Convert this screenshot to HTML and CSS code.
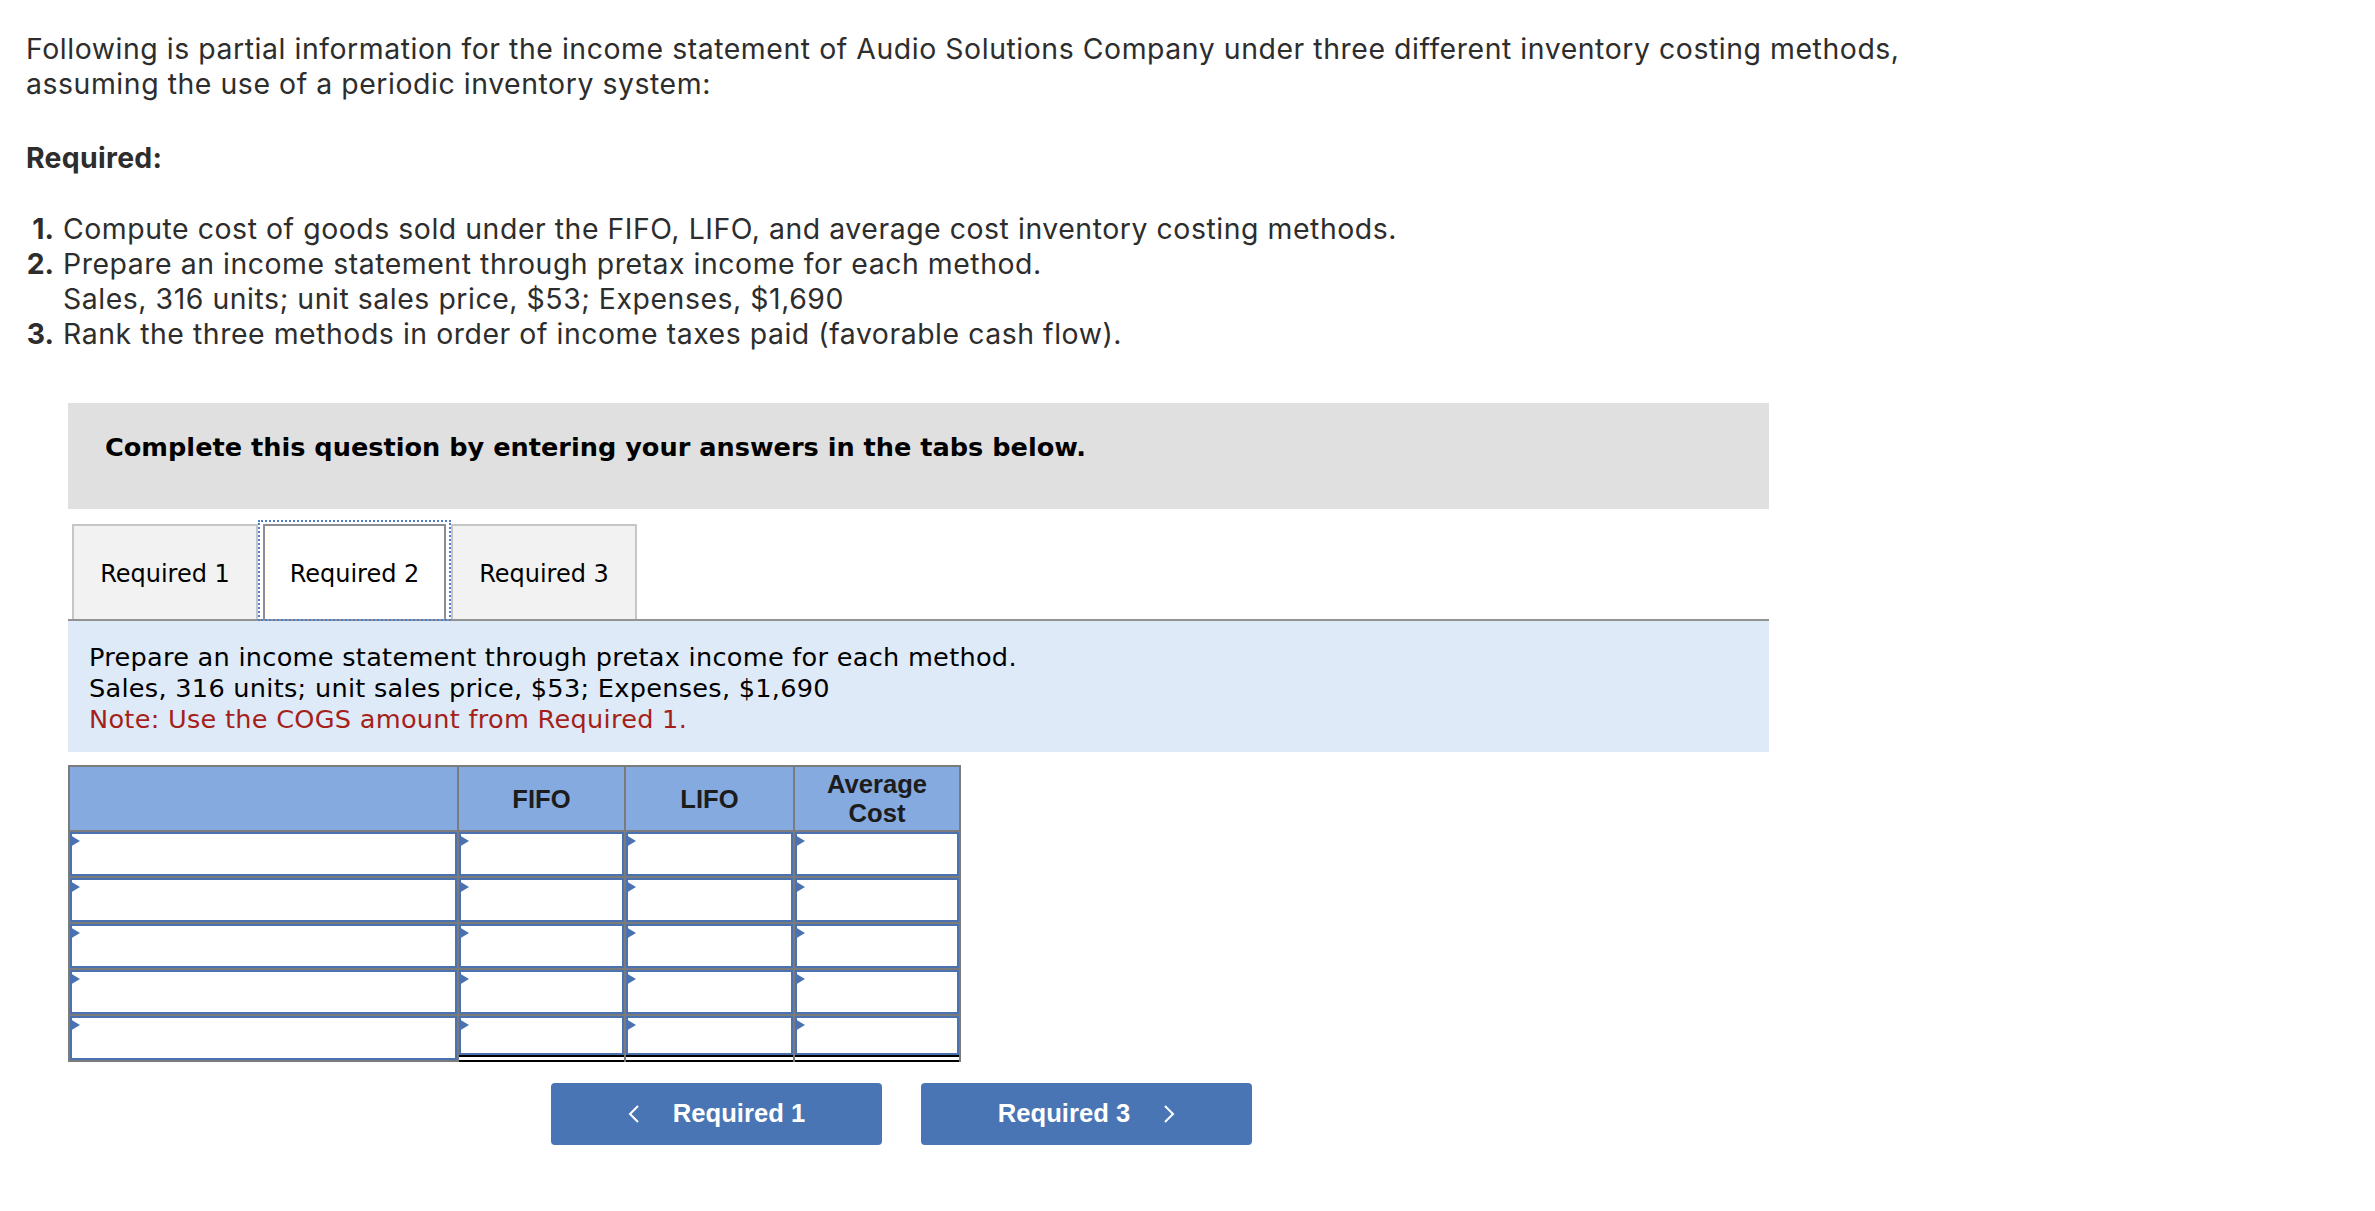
FILE: index.html
```html
<!DOCTYPE html>
<html lang="en">
<head>
<meta charset="utf-8">
<title>Audio Solutions Company</title>
<link rel="stylesheet" href="styles.css">
</head>
<body>
<div class="page">
  <p class="intro">Following is partial information for the income statement of Audio Solutions Company under three different inventory costing methods,<br>assuming the use of a periodic inventory system:</p>
  <p class="req-title">Required:</p>
  <ol class="req-list">
    <li><b>1.</b><span>Compute cost of goods sold under the FIFO, LIFO, and average cost inventory costing methods.</span></li>
    <li><b>2.</b><span>Prepare an income statement through pretax income for each method.<br>Sales, 316 units; unit sales price, $53; Expenses, $1,690</span></li>
    <li><b>3.</b><span>Rank the three methods in order of income taxes paid (favorable cash flow).</span></li>
  </ol>

  <div class="workspace">
    <div class="banner">Complete this question by entering your answers in the tabs below.</div>

    <div class="tabs">
      <div class="tab">Required 1</div>
      <div class="tab active">Required 2</div>
      <div class="tab">Required 3</div>
    </div>

    <div class="info">
      Prepare an income statement through pretax income for each method.<br>
      Sales, 316 units; unit sales price, $53; Expenses, $1,690<br>
      <span class="note">Note: Use the COGS amount from Required 1.</span>
    </div>

    <div class="sheet">
      <div class="hcell"></div>
      <div class="hcell">FIFO</div>
      <div class="hcell">LIFO</div>
      <div class="hcell">Average<br>Cost</div>

      <div class="field"></div><div class="field"></div><div class="field"></div><div class="field"></div>
      <div class="field"></div><div class="field"></div><div class="field"></div><div class="field"></div>
      <div class="field"></div><div class="field"></div><div class="field"></div><div class="field"></div>
      <div class="field"></div><div class="field"></div><div class="field"></div><div class="field"></div>

      <div class="cell"><div class="field"></div></div>
      <div class="cell total"><div class="field short"></div></div>
      <div class="cell total"><div class="field short"></div></div>
      <div class="cell total"><div class="field short"></div></div>
    </div>

    <div class="nav">
      <div class="btn">
        <svg class="chev" width="12" height="18" viewBox="0 0 12 18"><polyline points="10,1 2,9 10,17" fill="none" stroke="#fff" stroke-width="2"/></svg>
        <span>Required 1</span>
      </div>
      <div class="btn">
        <span>Required 3</span>
        <svg class="chev" width="12" height="18" viewBox="0 0 12 18"><polyline points="2,1 10,9 2,17" fill="none" stroke="#fff" stroke-width="2"/></svg>
      </div>
    </div>
  </div>
</div>
</body>
</html>
```
FILE: styles.css
```css
html, body {
  margin: 0;
  padding: 0;
  background: #ffffff;
}

.page {
  padding: 32px 0 40px 26px;
  font-family: Inter, "Open Sans", sans-serif;
  color: #2d2d2d;
}

.intro {
  margin: 0;
  font-size: 28.4px;
  line-height: 34.5px;
  letter-spacing: 0.56px;
  white-space: nowrap;
}

.req-title {
  margin: 40px 0 0;
  font-size: 28.4px;
  line-height: 34.5px;
  font-weight: 700;
  letter-spacing: 0.3px;
}

.req-list {
  list-style: none;
  margin: 35px 0 0;
  padding: 0;
  font-size: 28.4px;
  line-height: 35.3px;
  letter-spacing: 0.55px;
}

.req-list li {
  display: grid;
  grid-template-columns: 28px 1fr;
  column-gap: 9px;
}

.req-list b {
  text-align: right;
  font-weight: 700;
  letter-spacing: 0;
}

.workspace {
  margin: 51px 0 0 42px;
  width: 1701px;
}

.banner {
  box-sizing: border-box;
  height: 106px;
  background: #e0e0e0;
  padding: 29px 37px 0;
  font-family: "DejaVu Sans", Verdana, sans-serif;
  font-weight: 700;
  font-size: 25.6px;
  line-height: 30px;
  color: #000;
}

.tabs {
  margin-top: 15px;
  display: flex;
  align-items: flex-end;
  padding-left: 4px;
  height: 95px;
  border-bottom: 2px solid #939393;
}

.tab {
  box-sizing: border-box;
  height: 95px;
  width: 186px;
  padding-top: 4px;
  border: 2px solid #c6c6c6;
  border-bottom: 0;
  background: #f2f2f2;
  display: flex;
  align-items: center;
  justify-content: center;
  font-family: "DejaVu Sans", Verdana, sans-serif;
  font-size: 24px;
  color: #000;
}

.tab.active {
  position: relative;
  width: 183px;
  margin: 0 5px;
  background: #ffffff;
  border-color: #8e8e8e;
}

.tab.active::after {
  content: "";
  position: absolute;
  left: -7px;
  right: -7px;
  top: -6px;
  bottom: -2px;
  border: 2px dotted #4f7fc6;
}

.info {
  background: #deeaf7;
  padding: 21px 21px 17px;
  font-family: "DejaVu Sans", Verdana, sans-serif;
  font-size: 25.6px;
  line-height: 31px;
  letter-spacing: 0.27px;
  color: #000;
}

.note {
  color: #a51f1b;
}

.sheet {
  margin-top: 13px;
  display: grid;
  grid-template-columns: 387px 165px 167px 164px;
  grid-template-rows: 63px repeat(4, 44px) 46px;
  gap: 2px;
  background: #7b7b7b;
  padding: 2px 2px 0;
  width: max-content;
}

.hcell {
  background: #84aadf;
  display: flex;
  align-items: center;
  justify-content: center;
  text-align: center;
  padding-top: 2px;
  font-family: "Liberation Sans", Arial, sans-serif;
  font-weight: 700;
  font-size: 25.6px;
  line-height: 29px;
  color: #1c1c1c;
}

.field {
  box-sizing: border-box;
  height: 44px;
  border: 2px solid #4a72b1;
  background: #ffffff;
  position: relative;
}

.field::before {
  content: "";
  position: absolute;
  left: -2px;
  top: 1px;
  border-left: 10px solid #4a72b1;
  border-top: 6px solid transparent;
  border-bottom: 6px solid transparent;
}

.field.short {
  height: 39px;
}

.cell.total {
  background: #ffffff;
  border-bottom: 7px double #000;
}

.nav {
  display: flex;
  gap: 39px;
  margin-top: 21px;
  padding-left: 483px;
}

.btn {
  box-sizing: border-box;
  width: 331px;
  height: 62px;
  background: #4a75b5;
  border-radius: 4px;
  display: flex;
  align-items: center;
  justify-content: center;
  gap: 33px;
  color: #ffffff;
  font-family: "Liberation Sans", Arial, sans-serif;
  font-weight: 700;
  font-size: 25.6px;
}

.chev {
  display: block;
}
```
